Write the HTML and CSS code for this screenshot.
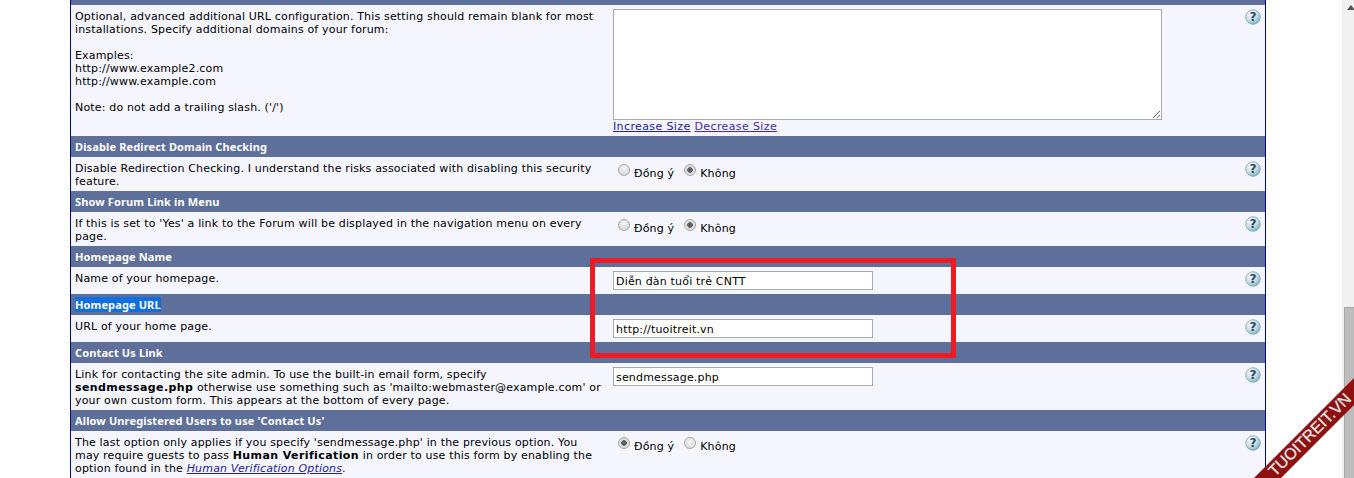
FILE: index.html
```html
<!DOCTYPE html>
<html lang="vi">
<head>
<meta charset="utf-8">
<title>Settings</title>
<link rel="stylesheet" href="styles.css">
</head>
<body>
<svg class="defs" width="0" height="0" aria-hidden="true">
  <defs>
    <radialGradient id="helpGrad" cx="35%" cy="30%" r="80%">
      <stop offset="0" stop-color="#f4f9fb"/>
      <stop offset="0.55" stop-color="#c6dde4"/>
      <stop offset="1" stop-color="#6fa3b4"/>
    </radialGradient>
    <symbol id="help" viewBox="0 0 16 16">
      <circle cx="8" cy="8" r="7.3" fill="url(#helpGrad)" stroke="#7fa9b8" stroke-width="0.8"/>
      <text x="8" y="12.2" text-anchor="middle" class="help-mark">?</text>
    </symbol>
  </defs>
</svg>
<div class="page">
  <main class="panel">
    <div class="head head-cut"></div>
    <section class="row row-tall">
      <div class="desc">Optional, advanced additional URL configuration. This setting should remain blank for most installations. Specify additional domains of your forum:<br><br>Examples:<br>http://www.example2.com<br>http://www.example.com<br><br>Note: do not add a trailing slash. ('/')</div>
      <div class="ctrl">
        <textarea class="area"></textarea>
        <div class="sizers"><a href="#a" class="link">Increase Size</a> <a href="#b" class="link visited">Decrease Size</a></div>
      </div>
      <svg class="help"><use href="#help"/></svg>
    </section>

    <div class="head">Disable Redirect Domain Checking</div>
    <section class="row">
      <div class="desc">Disable Redirection Checking. I understand the risks associated with disabling this security feature.</div>
      <div class="ctrl radios">
        <label class="opt"><input type="radio" name="r1"><span>Đồng ý</span></label>
        <label class="opt"><input type="radio" name="r1" checked><span>Không</span></label>
      </div>
      <svg class="help"><use href="#help"/></svg>
    </section>

    <div class="head">Show Forum Link in Menu</div>
    <section class="row">
      <div class="desc">If this is set to 'Yes' a link to the Forum will be displayed in the navigation menu on every page.</div>
      <div class="ctrl radios">
        <label class="opt"><input type="radio" name="r2"><span>Đồng ý</span></label>
        <label class="opt"><input type="radio" name="r2" checked><span>Không</span></label>
      </div>
      <svg class="help"><use href="#help"/></svg>
    </section>

    <div class="head">Homepage Name</div>
    <section class="row">
      <div class="desc">Name of your homepage.</div>
      <div class="ctrl"><input class="field" type="text" value="Diễn đàn tuổi trẻ CNTT"></div>
      <svg class="help"><use href="#help"/></svg>
    </section>

    <div class="head"><span class="selected">Homepage URL</span></div>
    <section class="row">
      <div class="desc">URL of your home page.</div>
      <div class="ctrl"><input class="field" type="text" value="http://tuoitreit.vn"></div>
      <svg class="help"><use href="#help"/></svg>
    </section>

    <div class="head">Contact Us Link</div>
    <section class="row">
      <div class="desc">Link for contacting the site admin. To use the built-in email form, specify <b>sendmessage.php</b> otherwise use something such as 'mailto:webmaster@example.com' or your own custom form. This appears at the bottom of every page.</div>
      <div class="ctrl"><input class="field" type="text" value="sendmessage.php"></div>
      <svg class="help"><use href="#help"/></svg>
    </section>

    <div class="head">Allow Unregistered Users to use 'Contact Us'</div>
    <section class="row">
      <div class="desc">The last option only applies if you specify 'sendmessage.php' in the previous option. You may require guests to pass <b>Human Verification</b> in order to use this form by enabling the option found in the <a href="#c" class="link"><i>Human Verification Options</i></a>.</div>
      <div class="ctrl radios radios-low">
        <label class="opt"><input type="radio" name="r3" checked><span>Đồng ý</span></label>
        <label class="opt"><input type="radio" name="r3"><span>Không</span></label>
      </div>
      <svg class="help"><use href="#help"/></svg>
    </section>
  </main>
  <div class="scrollbar">
    <div class="arrow"></div>
    <div class="thumb"></div>
  </div>
</div>
<div class="callout"></div>
<div class="ribbon"><span>TUOITREIT.VN</span></div>
</body>
</html>
```
FILE: styles.css
```css
html, body {
  margin: 0;
  height: 100%;
  overflow: hidden;
  background: #fff;
}
body {
  font-family: "DejaVu Sans", Verdana, sans-serif;
  font-size: 11px;
  line-height: 13px;
  letter-spacing: 0.165px;
  color: #000;
}
.defs { position: absolute; }
.page {
  display: flex;
  justify-content: space-between;
  height: 478px;
  padding-left: 70px;
}
.panel {
  width: 1194px;
  height: 478px;
  overflow: hidden;
  border-left: 1px solid #000a78;
  border-right: 1px solid #000a78;
  background: #f5f5ff;
}
.head {
  height: 13px;
  padding: 4px;
  background: #5e7099;
  color: #fff;
  font-family: "Noto Sans", "DejaVu Sans", sans-serif;
  font-weight: bold;
  letter-spacing: 0.13px;
}
.head-cut { height: 5px; padding: 0; }
.selected { background: #0f6fe0; }
.row {
  display: grid;
  grid-template-columns: 530px 1fr 16px;
  column-gap: 8px;
  padding: 4px;
  align-items: start;
}
.row-tall { padding-bottom: 3px; }
.desc { transform: translateY(1px); }
.desc b { letter-spacing: 0.4px; }
.ctrl { min-width: 0; }
.area {
  display: block;
  box-sizing: border-box;
  width: 549px;
  height: 111px;
  margin: 0;
  border: 1px solid #aaa;
  background: #fff;
  resize: both;
}
.sizers { height: 13px; letter-spacing: 0.38px; }
.link { color: #22229c; }
.visited { color: #4b2aa0; }
.field {
  display: block;
  box-sizing: border-box;
  width: 260px;
  height: 19px;
  margin: 0;
  padding: 2px 2px 0;
  border: 1px solid #aaa;
  background: #fff;
  font: 11px/13px "DejaVu Sans", Verdana, sans-serif;
  letter-spacing: 0.18px;
  color: #000;
}
.radios {
  display: flex;
  column-gap: 10px;
  padding: 3px 0 0 5px;
}
.radios-low { padding-top: 2px; }
.radios-low span { padding-top: 4px; }
.opt {
  display: flex;
  align-items: flex-start;
  column-gap: 4px;
}
.opt span { padding-top: 3px; }
.opt input {
  appearance: none;
  box-sizing: border-box;
  width: 12px;
  height: 12px;
  margin: 0;
  border: 1px solid #a8a8a8;
  border-radius: 50%;
  background: radial-gradient(circle at 50% 35%, #f4f4f4, #d4d4d4);
}
.opt input:checked {
  background: radial-gradient(circle, #5e5e5e 0 2.5px, #d8d8d8 3px, #eee 100%);
}
.help { width: 16px; height: 16px; }
.help-mark {
  font: bold 12px "DejaVu Sans", sans-serif;
  fill: #2d4a60;
}
.scrollbar {
  position: relative;
  width: 12px;
  height: 478px;
  background: #f0f0f0;
}
.arrow {
  position: absolute;
  top: 5px;
  left: 5px;
  border-left: 4px solid transparent;
  border-right: 4px solid transparent;
  border-bottom: 5px solid #505050;
}
.thumb {
  position: absolute;
  top: 307px;
  left: 2px;
  right: 0;
  bottom: 0;
  background: #bcbcbc;
  border: 1px solid #a8a8a8;
  border-width: 1px 0 0 1px;
}
.callout {
  position: absolute;
  left: 590px;
  top: 258px;
  width: 356px;
  height: 90px;
  border: 5px solid #ed1c24;
}
.ribbon {
  position: absolute;
  right: 0;
  bottom: 0;
  width: 100px;
  height: 100px;
  overflow: hidden;
  pointer-events: none;
}
.ribbon::before {
  content: "";
  position: absolute;
  inset: 0;
  background: #8f1010;
  clip-path: polygon(100% 0, 100% 27px, 27px 100%, 0 100%);
}
.ribbon span {
  position: absolute;
  left: 56px;
  top: 57px;
  transform: translate(-50%, -50%) rotate(-45deg);
  white-space: nowrap;
  font: 16px/20px "Liberation Sans", Arial, sans-serif;
  letter-spacing: 0;
  color: #dfe6e6;
  -webkit-text-stroke: 0.3px #dfe6e6;
}
```
